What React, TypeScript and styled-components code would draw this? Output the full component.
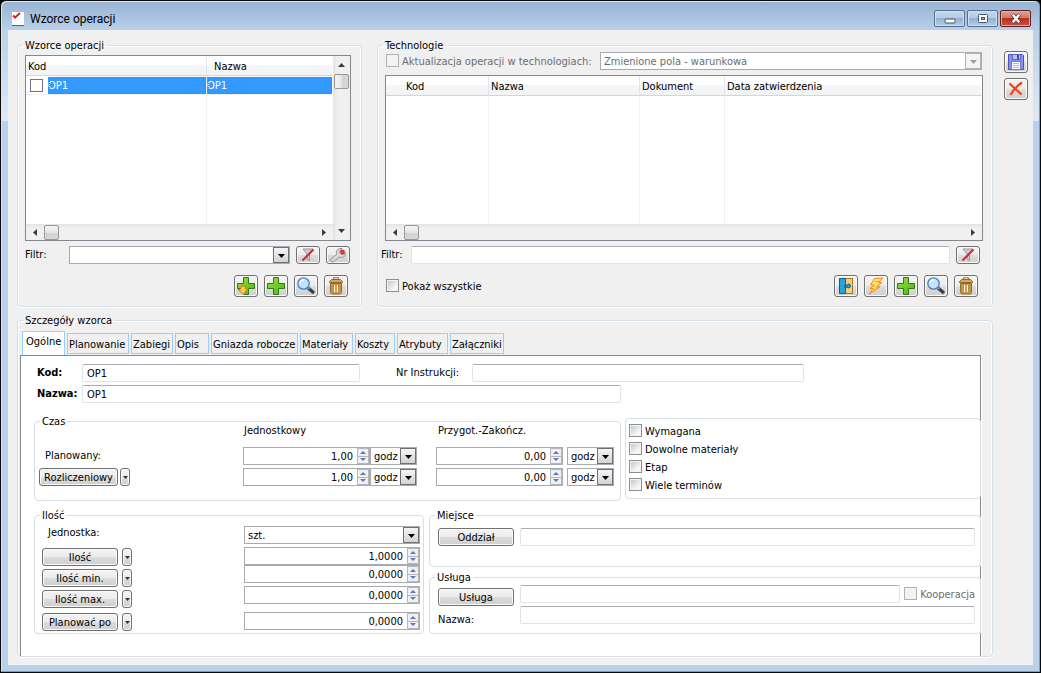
import React from 'react';
import styled, { createGlobalStyle, css } from 'styled-components';

const GlobalStyle = createGlobalStyle`
  *, *::before, *::after { box-sizing: border-box; }
  body {
    margin: 0;
    background: #000;
    color: #000;
    font: 11px/14px "DejaVu Sans Condensed", "Noto Sans", sans-serif;
  }
  button, input, select { font: inherit; color: inherit; margin: 0; }
`;

const buttonFace = css`
  border: 1px solid #707070;
  border-radius: 3px;
  background: linear-gradient(#f4f4f4, #ebebeb 50%, #dddddd 50%, #cfcfcf);
  box-shadow: inset 0 0 0 1px #fafafa;
`;

/* ---------- window frame ---------- */

const Frame = styled.div`
  min-height: 100vh;
  display: flex;
  flex-direction: column;
  padding: 0 7px 7px;
  border: 1px solid #0a0a0a;
  border-radius: 6px 6px 0 0;
  background: linear-gradient(#97b2d1 0, #b9d1ea 30px, #dfe9f6 120px, #b9d1ea 120px);
  box-shadow: inset -1px -1px 0 #35bcd3, inset 1px 1px 0 #dbe8f5;
`;

const TitleBar = styled.header`
  display: flex;
  align-items: center;
  gap: 5px;
  height: 29px;
  padding: 6px 2px 0 4px;
`;

const Title = styled.h1`
  flex: 1;
  margin: 0;
  font: 12px/16px Roboto, "Noto Sans", sans-serif;
`;

const Caption = styled.div`
  display: flex;
  gap: 2px;
`;

const CaptionButton = styled.button<{ $close?: boolean }>`
  display: grid;
  place-items: center;
  width: 31px;
  height: 17px;
  padding: 0;
  border: 1px solid ${p => (p.$close ? '#5b1f23' : '#536e8e')};
  border-radius: 2px;
  box-shadow: inset 0 0 0 1px ${p => (p.$close ? '#e9a79c' : '#cfe0f1')};
  background: ${p =>
    p.$close
      ? 'linear-gradient(#e0a196, #cf7567 50%, #b8301b 50%, #c9553c)'
      : 'linear-gradient(#c3d7ec, #b3cbe4 50%, #94b2d0 50%, #b2cde6)'};
`;

const Client = styled.div`
  flex: 1;
  display: flex;
  gap: 11px;
  padding: 8px 5px 8px 9px;
  background: #f0f0f0;
`;

const Main = styled.main`
  flex: 1;
  min-width: 0;
  display: flex;
  flex-direction: column;
  gap: 6px;
`;

const SideBar = styled.aside`
  display: flex;
  flex-direction: column;
  gap: 5px;
  padding-top: 13px;
`;

/* ---------- groups ---------- */

const GroupBox = styled.fieldset<{ $basis?: string }>`
  display: flex;
  flex-direction: column;
  flex: ${p => p.$basis ?? '1 1 0'};
  min-width: 0;
  margin: 0;
  padding: 0;
  border: 1px solid #d5dfe7;
  border-radius: 4px;
  box-shadow: inset 1px 1px 0 #fff, inset -1px 0 0 #fff, 0 1px 0 #fff;
`;

const Legend = styled.legend`
  height: 14px;
  margin-left: 5px;
  padding: 0 2px;
  line-height: 16px;
`;

const Row = styled.div<{ $gap?: number }>`
  display: flex;
  align-items: center;
  gap: ${p => p.$gap ?? 0}px;
`;

const TopGroups = styled.div`
  display: flex;
  gap: 15px;
`;

const TemplatesBody = styled.div`
  display: flex;
  flex-direction: column;
  padding: 3px 10px 9px 7px;
`;

const TechBody = styled.div`
  flex: 1;
  display: flex;
  flex-direction: column;
  padding: 0 9px 9px 7px;
`;

const UpdateRow = styled.div`
  display: flex;
  align-items: center;
  padding: 0 1px 5px;
  & > label { flex: 0 0 214px; }
`;

const FilterRow = styled.div<{ $label: number; $outdent?: number; $end: number }>`
  display: grid;
  grid-template-columns: ${p => p.$label}px 1fr;
  grid-auto-columns: 24px;
  grid-auto-flow: column;
  column-gap: 6px;
  align-items: center;
  margin: 5px ${p => p.$end}px 11px ${p => -(p.$outdent ?? 0)}px;
`;

const Tools = styled.div<{ $end: number }>`
  display: flex;
  align-items: center;
  gap: 6px;
  padding: 0 ${p => p.$end}px 0 1px;
`;

const Spacer = styled.div`
  flex: 1;
`;

const ToolButton = styled.button<{ $low?: boolean }>`
  ${buttonFace}
  display: grid;
  place-items: center;
  width: 24px;
  height: ${p => (p.$low ? 18 : 22)}px;
  padding: 0;
  svg { display: block; }
`;

/* ---------- fields ---------- */

const TextBox = styled.input<{ $width?: number }>`
  ${p => (p.$width ? `flex: 0 1 ${p.$width}px;` : 'flex: 1;')}
  width: 100%;
  min-width: 0;
  height: 18px;
  padding: 0 4px;
  border: 1px solid #dfe3ea;
  border-top-color: #abadb3;
  border-radius: 2px;
  background: #fff;
`;

const Box = styled.span<{ $width?: number; $disabled?: boolean }>`
  display: flex;
  ${p => (p.$width ? `flex: 0 0 ${p.$width}px; width: ${p.$width}px;` : 'flex: 1;')}
  min-width: 0;
  height: 18px;
  border: 1px solid #a9aab0;
  background: #fff;
  color: ${p => (p.$disabled ? '#6d6d6d' : '#000')};
`;

const Native = styled.select`
  flex: 1;
  min-width: 0;
  padding: 1px 0 0 3px;
  border: 0;
  background: transparent;
  appearance: none;
  opacity: 1;
`;

const Drop = styled.span<{ $disabled?: boolean }>`
  display: grid;
  place-items: center;
  flex: 0 0 16px;
  padding-top: 2px;
  border: 1px solid ${p => (p.$disabled ? '#b5b5b5' : '#707070')};
  background: ${p => (p.$disabled ? '#f4f4f4' : 'linear-gradient(#f4f4f4, #d4d4d4)')};
  color: ${p => (p.$disabled ? '#a0a0a0' : '#000')};
  pointer-events: none;
`;

const NumberText = styled.input`
  flex: 1;
  min-width: 0;
  width: 0;
  padding: 2px 4px 0 0;
  border: 0;
  background: transparent;
  text-align: right;
`;

const Steps = styled.span`
  display: flex;
  flex-direction: column;
  flex: 0 0 12px;
  gap: 1px;
  padding: 1px;
  background: #b6b7bd;
`;

const Step = styled.button`
  flex: 1;
  display: grid;
  place-items: center;
  padding: 0;
  border: 0;
  background: #f0f0f0;
`;

const CheckLabel = styled.label<{ $disabled?: boolean }>`
  display: flex;
  align-items: flex-start;
  gap: 3px;
  height: 14px;
  line-height: 16px;
  color: ${p => (p.$disabled ? '#6d6d6d' : '#000')};
  white-space: nowrap;
`;

const CheckInput = styled.input`
  flex: none;
  width: 13px;
  height: 13px;
  appearance: none;
  border: 1px solid #8e8f8f;
  background: linear-gradient(135deg, #c4c9d0, #f6f6f6 75%) content-box, #f4f4f4;
  padding: 1px;
  &:disabled { border-color: #b1b1b1; background: #f3f3f3; }
`;

const PushButton = styled.button<{ $width: number }>`
  ${buttonFace}
  flex: none;
  width: ${p => p.$width}px;
  height: 18px;
  padding: 2px 0 0;
`;

const MiniButton = styled.button`
  ${buttonFace}
  display: grid;
  place-items: center;
  width: 10px;
  height: 18px;
  padding: 0;
`;

/* ---------- data grids ---------- */

const GridBox = styled.div<{ $vertical?: boolean }>`
  flex: 1;
  display: grid;
  grid-template-columns: ${p => (p.$vertical ? '1fr 17px' : '1fr')};
  grid-template-rows: 1fr 16px;
  min-height: ${p => (p.$vertical ? 186 : 165)}px;
  border: 1px solid #828790;
  background: #fff;
`;

const DataTable = styled.table`
  width: 100%;
  height: 100%;
  table-layout: fixed;
  border-spacing: 0;
`;

const HeadCell = styled.th<{ $indent?: number; $line?: boolean }>`
  height: 20px;
  padding: 2px 0 0 ${p => p.$indent ?? 2}px;
  border-bottom: 1px solid #d5d5d5;
  border-right: 1px solid ${p => (p.$line ? '#e3e5ea' : 'transparent')};
  background: linear-gradient(#fff 45%, #f5f6f8 50%, #f2f3f5);
  background-clip: padding-box;
  font-weight: normal;
  text-align: left;
`;

const Cell = styled.td<{ $selected?: boolean; $line?: boolean }>`
  height: 19px;
  padding: 1px 0 0;
  border-top: 1px solid #fff;
  border-bottom: 1px solid #f0f0f0;
  border-right: 1px solid ${p => (p.$line ? '#f0f0f0' : 'transparent')};
  ${p =>
    p.$selected &&
    css`
      background: #3399ff;
      background-clip: padding-box;
      color: #fff;
      outline: 1px dotted #cc6600;
      outline-offset: -2px;
    `}
`;

const CheckCell = styled(Cell)`
  padding: 0 0 0 4px;
  input {
    display: block;
    border-color: #6f6f97;
    background: #fff;
  }
`;

const FillCell = styled.td<{ $line?: boolean }>`
  padding: 0;
  border-right: 1px solid ${p => (p.$line ? '#f0f0f0' : 'transparent')};
`;

const ScrollTrack = styled.div<{ $vertical?: boolean }>`
  display: flex;
  flex-direction: ${p => (p.$vertical ? 'column' : 'row')};
  align-items: center;
  ${p => p.$vertical && 'grid-column: 2; grid-row: 1 / 3;'}
  background: linear-gradient(${p => (p.$vertical ? '90deg' : '180deg')}, #e3e3e3, #f0f0f0 30%);
`;

const ScrollArrow = styled.button`
  display: grid;
  place-items: center;
  width: 18px;
  height: 18px;
  padding: 0;
  border: 0;
  background: transparent;
  color: #3c3c3c;
`;

const Thumb = styled.div<{ $vertical?: boolean }>`
  width: 15px;
  height: 15px;
  border: 1px solid #979797;
  border-radius: 2px;
  background: linear-gradient(${p => (p.$vertical ? '90deg' : '180deg')}, #f5f5f5, #e6e6e6 50%, #d2d2d4 50%, #d8d8da);
`;

/* ---------- details ---------- */

const DetailsBody = styled.div`
  flex: 1;
  display: flex;
  flex-direction: column;
  padding: 4px 11px 0 2px;
`;

const Tabs = styled.div`
  display: flex;
  align-items: flex-end;
  gap: 2px;
  height: 24px;
  padding: 0 2px 1px;
`;

const Tab = styled.button<{ $active?: boolean; $width: number }>`
  width: ${p => p.$width}px;
  height: 21px;
  padding: 2px 0 0 1px;
  border: 1px solid #99ccff;
  background: #f0f0f0;
  text-align: left;
  white-space: nowrap;
  ${p =>
    p.$active &&
    css`
      height: 24px;
      padding: 0 0 4px 3px;
      border-bottom: 0;
      background: #fff;
      align-self: flex-start;
    `}
`;

const Panel = styled.div`
  flex: 1;
  padding: 8px 0 18px 13px;
  border: 1px solid #828790;
  border-bottom: 0;
  background: #fff;
  box-shadow: 1px 0 0 #fff;
`;

const FormRow = styled.div`
  display: flex;
  align-items: center;
  margin-bottom: 3px;
  padding-left: 3px;
`;

const FieldLabel = styled.label<{ $width: number; $bold?: boolean; $lead?: number }>`
  flex: none;
  width: ${p => p.$width}px;
  padding-left: ${p => p.$lead ?? 0}px;
  box-sizing: content-box;
  font-weight: ${p => (p.$bold ? 'bold' : 'normal')};
  line-height: 16px;
`;

const Sections = styled.div<{ $top: number; $gap: number }>`
  display: flex;
  align-items: flex-start;
  gap: ${p => p.$gap}px;
  margin: ${p => p.$top}px -1px 0 0;
  fieldset { background: #fff; }
`;

const TimeBody = styled.div`
  display: flex;
  flex-direction: column;
  gap: 3px;
  margin-top: -4px;
  padding: 0 4px 14px;
`;

const TimeHead = styled.div`
  display: grid;
  grid-template-columns: 205px 194px 1fr;
  padding-bottom: 6px;
`;

const TimeRow = styled.div`
  display: grid;
  grid-template-columns: 204px 127px 47px 19px 127px 4px 47px;
  align-items: center;
  height: 18px;
`;

const Indented = styled.span`
  padding-left: 6px;
`;

const FlagBox = styled.div`
  flex: 1;
  display: flex;
  flex-direction: column;
  gap: 4px;
  margin-top: 4px;
  padding: 5px 3px 6px;
  border: 1px solid #d5dfe7;
  border-radius: 4px;
  background: #fff;
`;

const QtyBody = styled.div`
  display: grid;
  grid-template-columns: 202px 176px;
  padding: 4px 0 2px 7px;
`;

const QtyActions = styled.div`
  display: grid;
  grid-template-rows: 22px 21px 21px 23px 18px;
  align-items: start;
`;

const QtyFields = styled.div`
  display: grid;
  grid-template-rows: 21px 18px 21px 26px 18px;
`;

const Stack = styled.div`
  flex: 1;
  min-width: 0;
  display: flex;
  flex-direction: column;
  gap: 3px;
  fieldset { flex: none; }
`;

const PlaceBody = styled.div`
  display: flex;
  gap: 6px;
  padding: 6px 5px 20px 8px;
`;

const ServiceBody = styled.div`
  display: flex;
  gap: 6px;
  padding: 1px 5px 6px 8px;
`;

const ServiceLabels = styled.div`
  display: flex;
  flex-direction: column;
  gap: 7px;
  padding-top: 3px;
`;

const ServiceFields = styled.div`
  flex: 1;
  min-width: 0;
  display: flex;
  flex-direction: column;
  gap: 3px;
  & > input { flex: none; }
`;

/* ---------- drawings ---------- */

const Arrow = ({ dir, w = 7, color = 'currentColor' }: { dir: 'up' | 'down' | 'left' | 'right'; w?: number; color?: string }) => {
  const h = Math.ceil(w / 2);
  const flat = dir === 'up' || dir === 'down';
  const points = {
    down: `0,0 ${w},0 ${w / 2},${h}`,
    up: `0,${h} ${w},${h} ${w / 2},0`,
    left: `${h},0 ${h},${w} 0,${w / 2}`,
    right: `0,0 0,${w} ${h},${w / 2}`,
  }[dir];
  return (
    <svg width={flat ? w : h} height={flat ? h : w} aria-hidden="true">
      <polygon points={points} fill={color} />
    </svg>
  );
};

const AppIcon = () => (
  <svg width="13" height="14" viewBox="0 0 13 14" aria-hidden="true">
    <rect x="0" y="0" width="12" height="13" fill="#fff" />
    <path d="M0 13.5H12" stroke="#44658f" />
    <path d="M1 3.5L3 5.5L8 1" fill="none" stroke="#e0202a" strokeWidth="2" />
  </svg>
);

const PlusShape = () => (
  <path d="M6.5 .5H11.5V6.5H17.5V11.5H11.5V17.5H6.5V11.5H.5V6.5H6.5Z" fill="url(#leaf)" stroke="#2f7d10" />
);

const PlusIcon = () => (
  <svg width="18" height="18" viewBox="0 0 18 18" aria-hidden="true">
    <defs>
      <linearGradient id="leaf" x2="1" y2="1">
        <stop stopColor="#9be04a" />
        <stop offset="1" stopColor="#4fb010" />
      </linearGradient>
    </defs>
    <PlusShape />
  </svg>
);

const PlusCopyIcon = () => (
  <svg width="18" height="18" viewBox="0 0 18 18" aria-hidden="true">
    <PlusShape />
    <path d="M4 9.5L8.5 9V12H10.5L6.5 17.5L1 12.5H3.5Z" fill="#ffc64a" stroke="#e07a10" />
  </svg>
);

const SearchIcon = () => (
  <svg width="20" height="18" viewBox="0 0 20 18" aria-hidden="true">
    <path d="M12 11L18 16" stroke="#3c3f45" strokeWidth="3.5" />
    <path d="M11.5 10L13.5 12" stroke="#8a8f96" strokeWidth="2" />
    <circle cx="7.5" cy="6.5" r="5.7" fill="#c3e3fa" stroke="#4a7fb5" strokeWidth="1.3" />
    <path d="M4 6Q4.5 3 8 3" fill="none" stroke="#f5fbff" strokeWidth="1.5" />
  </svg>
);

const TrashIcon = () => (
  <svg width="16" height="18" viewBox="0 0 16 18" aria-hidden="true">
    <path d="M5.5 2.5V.8H10.5V2.5" fill="none" stroke="#94692c" />
    <path d="M1.5 5.5V4.5L3.5 2.5H12.5L14.5 4.5V5.5Z" fill="#d5a861" stroke="#94692c" />
    <path d="M2.5 6.5H13.5V15.5L12.5 17H3.5L2.5 15.5Z" fill="#c89545" stroke="#94692c" />
    <path d="M6.5 8V15M9.5 8V15" stroke="#fff" strokeWidth="1.6" />
    <path d="M5.4 8V15M8 8V15M10.6 8V15" stroke="#a87530" strokeWidth=".7" />
  </svg>
);

const FilterOffIcon = () => (
  <svg width="16" height="14" viewBox="0 0 16 14" aria-hidden="true">
    <path d="M3 1H13L9.5 6V12.5L7 11V6Z" fill="#c9cbcd" stroke="#96999c" />
    <path d="M2.5 12.5L13.5 1.5" stroke="#e0202a" strokeWidth="2" />
  </svg>
);

const WrenchIcon = () => (
  <svg width="18" height="16" viewBox="0 0 18 16" aria-hidden="true">
    <path
      d="M1.5 12.5L7.5 7.5Q6.5 3 10.5 1.5L13 1.5L10.5 4.5L11.5 7L14.5 7.5L16.5 5.5Q16.5 10.5 12.5 10.5L10 10L4.5 15Q1.5 15.5 1.5 12.5Z"
      fill="#d9dadb"
      stroke="#8f9396"
    />
    <circle cx="13.5" cy="5" r="2.4" fill="#e23a22" />
  </svg>
);

const PuzzleIcon = () => (
  <svg width="16" height="16" viewBox="0 0 16 16" aria-hidden="true">
    <rect x="7.5" y=".5" width="7" height="15" fill="#f6ce7a" stroke="#a9782a" />
    <path d="M1.5 .5H7.5V15.5H1.5Z" fill="#28a5dc" stroke="#0b5f92" />
    <path d="M7 7L9 7.5Q9.5 5.5 11.3 6Q13 7 12.3 9Q10.5 10.7 9 9L7 9.5Z" fill="#28a5dc" stroke="#0b4f82" />
  </svg>
);

const BoltIcon = () => (
  <svg width="18" height="18" viewBox="0 0 18 18" aria-hidden="true">
    <path
      d="M7.5 1.5L16 1L11.5 5.5H15L9.5 10H13L2 17L6 11.5H3L7.5 8H3.5Z"
      fill="#ffe06a"
      stroke="#f08a1c"
      strokeLinejoin="round"
    />
    <path d="M8 4.5H12M6 13L10 9.5" stroke="#f7a93c" />
  </svg>
);

const SaveIcon = () => (
  <svg width="18" height="18" viewBox="0 0 18 18" aria-hidden="true">
    <path d="M1.5 1.5H15.5L16.5 2.5V16.5H1.5Z" fill="#8890ea" stroke="#4b52b8" />
    <rect x="5.5" y="1.5" width="8" height="5" fill="#b9c3f0" stroke="#5f68c9" />
    <rect x="10" y="2" width="2" height="4" fill="#3f4aa8" />
    <rect x="4.5" y="8.5" width="9" height="8" fill="#fafaff" stroke="#6f77d0" />
    <path d="M6 10.5H12M6 12.5H12M6 14.5H12" stroke="#b4b6c6" />
  </svg>
);

const CancelIcon = () => (
  <svg width="16" height="16" viewBox="0 0 16 16" aria-hidden="true">
    <path d="M1.5 2.5L13.5 13.5" stroke="#f0411c" strokeWidth="2.2" />
    <path d="M14 1.5Q7 6 2.5 14" fill="none" stroke="#f0411c" strokeWidth="2.2" />
  </svg>
);

/* ---------- composed parts ---------- */

const Check = ({ text, disabled }: { text: string; disabled?: boolean }) => (
  <CheckLabel $disabled={disabled}>
    <CheckInput type="checkbox" disabled={disabled} />
    {text}
  </CheckLabel>
);

const Combo = ({ label, id, value = '', width, disabled }: { label?: string; id?: string; value?: string; width?: number; disabled?: boolean }) => (
  <Box $width={width} $disabled={disabled}>
    <Native id={id} aria-label={label} disabled={disabled} defaultValue={value}>
      <option value={value}>{value}</option>
    </Native>
    <Drop $disabled={disabled}>
      <Arrow dir="down" />
    </Drop>
  </Box>
);

const Spin = ({ label, value, width }: { label: string; value: string; width: number }) => (
  <Box $width={width}>
    <NumberText aria-label={label} defaultValue={value} inputMode="decimal" />
    <Steps>
      <Step type="button" aria-label={`${label} +`}>
        <Arrow dir="up" w={6} color="#5f78c4" />
      </Step>
      <Step type="button" aria-label={`${label} -`}>
        <Arrow dir="down" w={6} color="#5f78c4" />
      </Step>
    </Steps>
  </Box>
);

const Action = ({ text, width, gap }: { text: string; width: number; gap: number }) => (
  <Row $gap={gap}>
    <PushButton type="button" $width={width}>{text}</PushButton>
    <MiniButton type="button" aria-label={`${text} – menu`}>
      <Arrow dir="down" w={5} color="#333" />
    </MiniButton>
  </Row>
);

const HScroll = () => (
  <ScrollTrack>
    <ScrollArrow type="button" aria-label="W lewo"><Arrow dir="left" /></ScrollArrow>
    <Thumb />
    <Spacer />
    <ScrollArrow type="button" aria-label="W prawo"><Arrow dir="right" /></ScrollArrow>
  </ScrollTrack>
);

const tabs: [string, number][] = [
  ['Ogólne', 43],
  ['Planowanie', 62],
  ['Zabiegi', 42],
  ['Opis', 34],
  ['Gniazda robocze', 87],
  ['Materiały', 53],
  ['Koszty', 40],
  ['Atrybuty', 51],
  ['Załączniki', 54],
];

const quantities: [string, string][] = [
  ['Ilość', '1,0000'],
  ['Ilość min.', '0,0000'],
  ['Ilość max.', '0,0000'],
  ['Planować po', '0,0000'],
];

const TimeValues = ({ name, unit, prep }: { name: string; unit: string; prep: string }) => (
  <>
    <Spin label={`${name} – jednostkowy`} value={unit} width={127} />
    <Combo label={`${name} – jednostka`} value="godz" width={47} />
    <span />
    <Spin label={`${name} – przygotowawczy`} value={prep} width={127} />
    <span />
    <Combo label={`${name} – jednostka przygot.`} value="godz" width={47} />
  </>
);

const Templates = () => (
  <GroupBox $basis="0 0 345px">
    <Legend>Wzorce operacji</Legend>
    <TemplatesBody>
      <GridBox $vertical>
        <DataTable>
          <colgroup>
            <col style={{ width: 22 }} />
            <col style={{ width: 159 }} />
            <col />
          </colgroup>
          <thead>
            <tr>
              <HeadCell colSpan={2} $line>Kod</HeadCell>
              <HeadCell $indent={7}>Nazwa</HeadCell>
            </tr>
          </thead>
          <tbody>
            <tr>
              <CheckCell><CheckInput type="checkbox" aria-label="OP1" /></CheckCell>
              <Cell $selected $line>OP1</Cell>
              <Cell $selected>OP1</Cell>
            </tr>
            <tr aria-hidden="true">
              <FillCell colSpan={2} $line />
              <FillCell />
            </tr>
          </tbody>
        </DataTable>
        <ScrollTrack $vertical>
          <ScrollArrow type="button" aria-label="W górę"><Arrow dir="up" /></ScrollArrow>
          <Thumb $vertical />
          <Spacer />
          <ScrollArrow type="button" aria-label="W dół"><Arrow dir="down" /></ScrollArrow>
        </ScrollTrack>
        <HScroll />
      </GridBox>
      <FilterRow $label={38} $end={1}>
        <label htmlFor="filter-templates">Filtr:</label>
        <Combo id="filter-templates" />
        <ToolButton type="button" $low aria-label="Wyczyść filtr"><FilterOffIcon /></ToolButton>
        <ToolButton type="button" $low aria-label="Ustawienia filtra"><WrenchIcon /></ToolButton>
      </FilterRow>
      <Tools $end={3}>
        <Spacer />
        <ToolButton type="button" aria-label="Dodaj z kopii"><PlusCopyIcon /></ToolButton>
        <ToolButton type="button" aria-label="Dodaj"><PlusIcon /></ToolButton>
        <ToolButton type="button" aria-label="Podgląd"><SearchIcon /></ToolButton>
        <ToolButton type="button" aria-label="Usuń"><TrashIcon /></ToolButton>
      </Tools>
    </TemplatesBody>
  </GroupBox>
);

const Technologies = () => (
  <GroupBox>
    <Legend>Technologie</Legend>
    <TechBody>
      <UpdateRow>
        <Check text="Aktualizacja operacji w technologiach:" disabled />
        <Combo label="Zakres aktualizacji" value="Zmienione pola - warunkowa" disabled />
      </UpdateRow>
      <GridBox>
        <DataTable>
          <colgroup>
            <col style={{ width: 103 }} />
            <col style={{ width: 151 }} />
            <col style={{ width: 85 }} />
            <col />
          </colgroup>
          <thead>
            <tr>
              <HeadCell $indent={20} $line>Kod</HeadCell>
              <HeadCell $line>Nazwa</HeadCell>
              <HeadCell $line>Dokument</HeadCell>
              <HeadCell>Data zatwierdzenia</HeadCell>
            </tr>
          </thead>
          <tbody>
            <tr aria-hidden="true">
              <FillCell $line />
              <FillCell $line />
              <FillCell $line />
              <FillCell />
            </tr>
          </tbody>
        </DataTable>
        <HScroll />
      </GridBox>
      <FilterRow $label={24} $outdent={4} $end={3}>
        <label htmlFor="filter-tech">Filtr:</label>
        <TextBox id="filter-tech" />
        <ToolButton type="button" $low aria-label="Wyczyść filtr technologii"><FilterOffIcon /></ToolButton>
      </FilterRow>
      <Tools $end={5}>
        <Check text="Pokaż wszystkie" />
        <Spacer />
        <ToolButton type="button" aria-label="Moduły"><PuzzleIcon /></ToolButton>
        <ToolButton type="button" aria-label="Wykonaj"><BoltIcon /></ToolButton>
        <ToolButton type="button" aria-label="Dodaj technologię"><PlusIcon /></ToolButton>
        <ToolButton type="button" aria-label="Podgląd technologii"><SearchIcon /></ToolButton>
        <ToolButton type="button" aria-label="Usuń technologię"><TrashIcon /></ToolButton>
      </Tools>
    </TechBody>
  </GroupBox>
);

const Details = () => (
  <GroupBox>
    <Legend>Szczegóły wzorca</Legend>
    <DetailsBody>
      <Tabs role="tablist">
        {tabs.map(([name, width], i) => (
          <Tab key={name} type="button" role="tab" aria-selected={i === 0} $active={i === 0} $width={width}>
            {name}
          </Tab>
        ))}
      </Tabs>
      <Panel role="tabpanel">
        <FormRow>
          <FieldLabel htmlFor="kod" $width={45} $bold>Kod:</FieldLabel>
          <TextBox id="kod" defaultValue="OP1" $width={278} />
          <FieldLabel htmlFor="nr" $width={76} $lead={36}>Nr Instrukcji:</FieldLabel>
          <TextBox id="nr" $width={332} />
        </FormRow>
        <FormRow>
          <FieldLabel htmlFor="nazwa" $width={45} $bold>Nazwa:</FieldLabel>
          <TextBox id="nazwa" defaultValue="OP1" $width={539} />
        </FormRow>

        <Sections $top={11} $gap={4}>
          <GroupBox $basis="0 0 587px">
            <Legend>Czas</Legend>
            <TimeBody>
              <TimeHead>
                <span />
                <span>Jednostkowy</span>
                <span>Przygot.-Zakończ.</span>
              </TimeHead>
              <TimeRow>
                <Indented>Planowany:</Indented>
                <TimeValues name="Planowany" unit="1,00" prep="0,00" />
              </TimeRow>
              <TimeRow>
                <Action text="Rozliczeniowy" width={79} gap={2} />
                <TimeValues name="Rozliczeniowy" unit="1,00" prep="0,00" />
              </TimeRow>
            </TimeBody>
          </GroupBox>
          <FlagBox>
            <Check text="Wymagana" />
            <Check text="Dowolne materiały" />
            <Check text="Etap" />
            <Check text="Wiele terminów" />
          </FlagBox>
        </Sections>

        <Sections $top={7} $gap={5}>
          <GroupBox $basis="0 0 390px">
            <Legend>Ilość</Legend>
            <QtyBody>
              <QtyActions>
                <label htmlFor="unit"><Indented>Jednostka:</Indented></label>
                {quantities.map(([name]) => (
                  <Action key={name} text={name} width={76} gap={4} />
                ))}
              </QtyActions>
              <QtyFields>
                <Combo id="unit" value="szt." width={176} />
                {quantities.map(([name, value]) => (
                  <Spin key={name} label={name} value={value} width={176} />
                ))}
              </QtyFields>
            </QtyBody>
          </GroupBox>
          <Stack>
            <GroupBox>
              <Legend>Miejsce</Legend>
              <PlaceBody>
                <PushButton type="button" $width={76}>Oddział</PushButton>
                <TextBox aria-label="Oddział" />
              </PlaceBody>
            </GroupBox>
            <GroupBox>
              <Legend>Usługa</Legend>
              <ServiceBody>
                <ServiceLabels>
                  <PushButton type="button" $width={76}>Usługa</PushButton>
                  <label htmlFor="service-name">Nazwa:</label>
                </ServiceLabels>
                <ServiceFields>
                  <Row $gap={4}>
                    <TextBox aria-label="Usługa" />
                    <Check text="Kooperacja" disabled />
                  </Row>
                  <TextBox id="service-name" />
                </ServiceFields>
              </ServiceBody>
            </GroupBox>
          </Stack>
        </Sections>
      </Panel>
    </DetailsBody>
  </GroupBox>
);

export default function App() {
  return (
    <>
      <GlobalStyle />
      <Frame>
        <TitleBar>
          <AppIcon />
          <Title>Wzorce operacji</Title>
          <Caption>
            <CaptionButton type="button" aria-label="Minimalizuj">
              <svg width="12" height="11" aria-hidden="true">
                <rect x="1" y="6" width="10" height="4" rx="1" fill="#fff" stroke="#4a5564" />
              </svg>
            </CaptionButton>
            <CaptionButton type="button" aria-label="Maksymalizuj">
              <svg width="12" height="11" aria-hidden="true">
                <rect x="1.5" y="1.5" width="9" height="8" rx="1" fill="#fff" stroke="#4a5564" />
                <rect x="4.5" y="4.5" width="3" height="2" fill="#9fb9d5" stroke="#4a5564" />
              </svg>
            </CaptionButton>
            <CaptionButton type="button" $close aria-label="Zamknij">
              <svg width="12" height="11" aria-hidden="true">
                <path d="M2.5 1.5L9.5 9.5M9.5 1.5L2.5 9.5" stroke="#4d3b46" strokeWidth="4" />
                <path d="M2.8 1.8L9.2 9.2M9.2 1.8L2.8 9.2" stroke="#fff" strokeWidth="2.4" />
              </svg>
            </CaptionButton>
          </Caption>
        </TitleBar>
        <Client>
          <Main>
            <TopGroups>
              <Templates />
              <Technologies />
            </TopGroups>
            <Details />
          </Main>
          <SideBar>
            <ToolButton type="button" aria-label="Zapisz"><SaveIcon /></ToolButton>
            <ToolButton type="button" aria-label="Anuluj"><CancelIcon /></ToolButton>
          </SideBar>
        </Client>
      </Frame>
    </>
  );
}
